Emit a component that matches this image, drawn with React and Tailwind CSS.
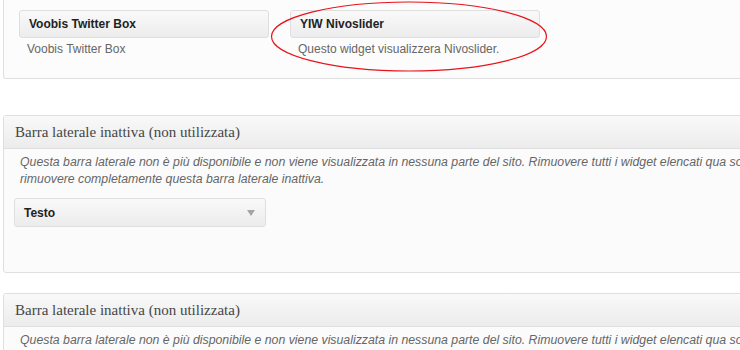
export default function App() {
  const line1 =
    "Questa barra laterale non è più disponibile e non viene visualizzata in nessuna parte del sito. Rimuovere tutti i widget elencati qua sotto per";
  const line2 = "rimuovere completamente questa barra laterale inattiva.";
  const Desc = () => (
    <p className="pt-[5px] pl-[16px] italic text-[12.3px] leading-[17px] text-[#666] whitespace-nowrap">
      <span className="block">{line1}</span>
      <span className="block">{line2}</span>
    </p>
  );
  const Header = () => (
    <div className="h-[33px] border-b border-[#dfdfdf] bg-linear-to-b from-[#f9f9f9] to-[#ececec] pl-[11px] font-['Liberation_Serif',Georgia,serif] text-[15px] leading-[33px] text-[#464646]">
      Barra laterale inattiva (non utilizzata)
    </div>
  );
  return (
    <div className="relative w-[740px] h-[350px] overflow-hidden bg-white font-['Liberation_Sans',Arial,sans-serif]">
      {/* Top panel */}
      <div className="ml-[3px] w-[780px] h-[79px] border-x border-b border-[#dfdfdf] rounded-bl-[3px] bg-[#fcfcfc] pt-[10px] pl-[15px]">
        <div className="flex gap-[21px]">
          <div className="w-[250px]">
            <div className="h-[28px] border border-[#dfdfdf] rounded-[3px] bg-linear-to-b from-[#f9f9f9] to-[#ececec] pl-[9px] text-[12px] leading-[26px] font-bold text-[#222]">
              Voobis Twitter Box
            </div>
            <div className="mt-[4px] pl-[8px] text-[12px] leading-[15px] text-[#666]">Voobis Twitter Box</div>
          </div>
          <div className="w-[250px]">
            <div className="h-[28px] border border-[#dfdfdf] rounded-[3px] bg-linear-to-b from-[#f9f9f9] to-[#ececec] pl-[9px] text-[12px] leading-[26px] font-bold text-[#222]">
              YIW Nivoslider
            </div>
            <div className="mt-[4px] pl-[8px] text-[12px] leading-[15px] text-[#666]">Questo widget visualizzera Nivoslider.</div>
          </div>
        </div>
      </div>

      {/* Panel 2 */}
      <div className="mt-[36px] ml-[3px] w-[780px] h-[158px] border border-[#dfdfdf] rounded-l-[3px] bg-[#fbfbfb] overflow-hidden">
        <Header />
        <Desc />
        <div className="mt-[10px] ml-[10px] w-[252px] h-[29px] border border-[#dfdfdf] rounded-[3px] bg-linear-to-b from-[#f9f9f9] to-[#ececec] flex items-center justify-between pl-[9px] pr-[10px]">
          <span className="text-[12px] font-bold text-[#222]">Testo</span>
          <svg width="8" height="6" viewBox="0 0 8 6"><path d="M0 0 H8 L4 6 Z" fill="#a5a5a5" /></svg>
        </div>
      </div>

      {/* Panel 3 */}
      <div className="mt-[20px] ml-[3px] w-[780px] h-[80px] border border-[#dfdfdf] rounded-l-[3px] bg-[#fbfbfb] overflow-hidden">
        <Header />
        <Desc />
      </div>

      {/* Red ellipse annotation */}
      <svg className="absolute left-0 top-0 pointer-events-none" width="740" height="350">
        <ellipse cx="409" cy="36.5" rx="137.5" ry="34.5" fill="none" stroke="#e8131b" strokeWidth="1.2" />
      </svg>
    </div>
  );
}
